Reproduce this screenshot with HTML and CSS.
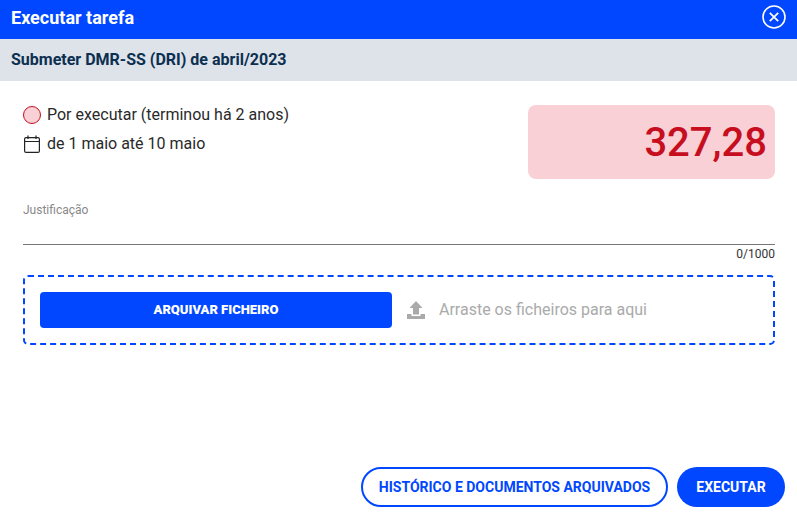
FILE: index.html
```html
<!DOCTYPE html>
<html lang="pt">
<head>
    <meta charset="UTF-8">
    <meta name="viewport" content="width=device-width, initial-scale=1.0">
    <title>Executar tarefa</title>
    <link rel="stylesheet" href="styles.css">
</head>
<body>

    <div class="dialog">

        <!-- Header -->
        <header class="dialog-header">
            <h1>Executar tarefa</h1>
            <button class="close-btn" aria-label="Fechar">
                <svg width="24" height="24" viewBox="0 0 24 24" fill="none" stroke="#fff">
                    <circle cx="12" cy="12" r="11" stroke-width="1.6"/>
                    <path d="M7.8 7.8l8.4 8.4M16.2 7.8l-8.4 8.4" stroke-width="1.7"/>
                </svg>
            </button>
        </header>

        <!-- Subtitle -->
        <div class="dialog-subtitle">Submeter DMR-SS (DRI) de abril/2023</div>

        <!-- Main Content -->
        <div class="dialog-body">

            <div class="summary">
                <div class="summary-info">
                    <div class="info-row">
                        <span class="status-dot"></span>
                        <span>Por executar (terminou há 2 anos)</span>
                    </div>
                    <div class="info-row">
                        <svg class="calendar-icon" width="16" height="18" viewBox="0 0 16 18" fill="none" stroke="#222" stroke-width="1.2">
                            <rect x="0.6" y="2.6" width="14.8" height="14.8" rx="1.5"/>
                            <path d="M0.6 6.500h14.800M4 0.500v3.500M12 0.500v3.500"/>
                        </svg>
                        <span>de 1 maio até 10 maio</span>
                    </div>
                </div>
                <div class="amount">327,28</div>
            </div>

            <!-- Justification -->
            <div class="field">
                <label class="field-label" for="justificacao">Justificação</label>
                <input class="field-input" id="justificacao" type="text">
                <div class="field-count">0/1000</div>
            </div>

            <!-- Upload -->
            <div class="upload-zone">
                <button class="upload-btn">ARQUIVAR FICHEIRO</button>
                <div class="upload-hint">
                    <svg width="18" height="18" viewBox="0 0 18 18" fill="#aaa">
                        <path d="M9 0l6.500 7H12v6.500H6V7H2.500z"/>
                        <path d="M0 13h4.500v2h9v-2H18v5H0z"/>
                    </svg>
                    <span>Arraste os ficheiros para aqui</span>
                </div>
            </div>

        </div>

        <!-- Footer -->
        <footer class="dialog-footer">
            <button class="btn btn-outline">HISTÓRICO E DOCUMENTOS ARQUIVADOS</button>
            <button class="btn btn-primary">EXECUTAR</button>
        </footer>

    </div>

</body>
</html>
```

FILE: styles.css
```css
/* Base */
* {
    box-sizing: border-box;
}

body {
    margin: 0;
    font-family: Roboto, "Liberation Sans", sans-serif;
    background-color: white;
    color: #222;
}

button {
    font-family: inherit;
    cursor: pointer;
}

/* Dialog */
.dialog {
    height: 516px;
    display: flex;
    flex-direction: column;
}

/* Header */
.dialog-header {
    height: 39px;
    flex-shrink: 0;
    display: flex;
    align-items: center;
    justify-content: space-between;
    padding: 0 11px;
    background-color: #0047ff;
    color: white;
}

.dialog-header h1 {
    margin: -4px 0 0;
    font-size: 18px;
    font-weight: 700;
}

.close-btn {
    display: flex;
    margin-top: -5px;
    padding: 0;
    background: none;
    border: none;
}

/* Subtitle */
.dialog-subtitle {
    height: 42px;
    flex-shrink: 0;
    display: flex;
    align-items: center;
    padding: 0 11px 2px;
    background-color: #dee2e9;
    color: #0b2f50;
    font-size: 16px;
    font-weight: 700;
}

/* Body */
.dialog-body {
    flex: 1;
    padding: 24px 22px 0 23px;
}

.summary {
    height: 74px;
    display: flex;
    justify-content: space-between;
}

.info-row {
    height: 29px;
    display: flex;
    align-items: center;
    font-size: 16px;
    color: #2a2a2a;
}

.summary-info {
    margin-top: -5px;
}

.status-dot {
    width: 18px;
    height: 18px;
    margin-right: 6px;
    border: 1px solid #c70e1e;
    border-radius: 50%;
    background-color: #f9d0d5;
}

.calendar-icon {
    margin-left: 1px;
    margin-right: 7px;
}

.amount {
    width: 247px;
    display: flex;
    align-items: center;
    justify-content: flex-end;
    padding-right: 8px;
    border-radius: 8px;
    background-color: #f9d0d5;
    color: #c70e1e;
    font-size: 40px;
    font-weight: 500;
}

/* Justification field */
.field {
    margin-top: 24px;
}

.field-label {
    display: block;
    font-size: 12px;
    line-height: 14px;
    color: #888;
}

.field-input {
    display: block;
    width: 100%;
    height: 28px;
    padding: 0;
    border: none;
    border-bottom: 1px solid #777;
    outline: none;
}

.field-count {
    margin-top: 2px;
    text-align: right;
    font-size: 12px;
    line-height: 14px;
    color: #333;
}

/* Upload */
.upload-zone {
    height: 70px;
    margin-top: 14px;
    display: flex;
    align-items: center;
    padding: 0 15px;
    border: 2px dashed #0047ff;
    border-radius: 5px;
}

.upload-btn {
    width: 352px;
    height: 36px;
    padding: 0 0 2px;
    border: none;
    border-radius: 4px;
    background-color: #0047ff;
    color: white;
    font-size: 13px;
    font-weight: 900;
}

.upload-hint {
    display: flex;
    align-items: center;
    gap: 14px;
    margin-left: 15px;
    padding-bottom: 1px;
    color: #aaa;
    font-size: 16px;
}

/* Footer */
.dialog-footer {
    display: flex;
    justify-content: flex-end;
    gap: 9px;
    padding: 0 12px 9px;
}

.btn {
    height: 40px;
    border-radius: 20px;
    font-size: 14px;
    font-weight: 700;
}

.btn-outline {
    width: 307px;
    border: 2px solid #0047ff;
    background-color: white;
    color: #0047ff;
}

.btn-primary {
    width: 108px;
    border: none;
    background-color: #0047ff;
    color: white;
}
```
